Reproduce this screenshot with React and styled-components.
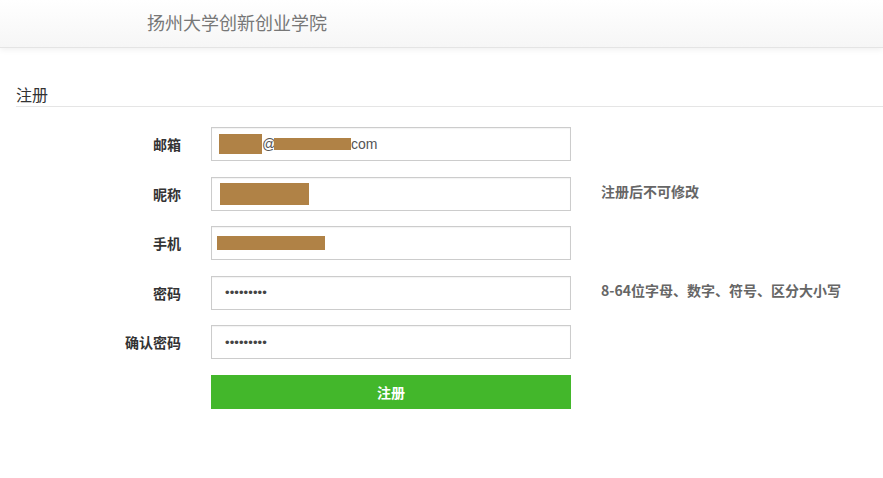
import React from "react";
import styled, { createGlobalStyle } from "styled-components";

const Global = createGlobalStyle`
  html, body { margin: 0; padding: 0; background: #fff; }
  body { font-family: "Liberation Sans", "Noto Sans CJK SC", sans-serif; color: #333; }
`;

const Header = styled.header`
  height: 47px;
  background: linear-gradient(#ffffff, #f6f6f6);
  border-bottom: 1px solid #e4e4e4;
  box-shadow: 0 2px 6px rgba(0, 0, 0, 0.06);
  display: flex;
  align-items: flex-start;
  padding-left: 147px;
`;

const Brand = styled.div`
  font-family: "Noto Sans CJK SC", sans-serif;
  font-size: 18px;
  line-height: 22px;
  margin-top: 11px;
  color: #777;
`;

const Section = styled.section`
  margin: 36px 0 0 16px;
`;

const SectionTitle = styled.h2`
  margin: 0;
  font-family: "Noto Sans CJK SC", sans-serif;
  font-weight: normal;
  font-size: 16px;
  line-height: 20px;
  color: #333;
  padding-bottom: 2px;
  border-bottom: 1px solid #e5e5e5;
`;

const Form = styled.div`
  display: grid;
  grid-template-columns: 165px 360px auto;
  column-gap: 30px;
  row-gap: 15.5px;
  margin-top: 20px;
  align-items: center;
`;

const Label = styled.label`
  font-family: "Noto Sans CJK SC", sans-serif;
  font-weight: bold;
  font-size: 14px;
  color: #333;
  text-align: right;
`;

const Field = styled.div`
  box-sizing: border-box;
  height: 34px;
  border: 1px solid #cccccc;
  box-shadow: inset 0 1px 1px rgba(0, 0, 0, 0.05);
  background: #fff;
  display: flex;
  align-items: center;
  padding-left: 5px;
  font-size: 14px;
  color: #555;
  white-space: nowrap;
  overflow: hidden;
`;

const Redact = styled.span`
  display: inline-block;
  width: ${(p) => p.$w}px;
  height: ${(p) => p.$h}px;
  margin-left: ${(p) => p.$ml || 0}px;
  background: #b08246;
  flex: none;
`;

const At = styled.span`
  display: inline-block;
  width: 14px;
  flex: none;
`;

const Dots = styled.span`
  margin-left: 8px;
  font-size: 13px;
  letter-spacing: 0.1px;
  color: #444;
`;

const Hint = styled.div`
  font-family: "Noto Sans CJK SC", sans-serif;
  font-weight: bold;
  font-size: 14px;
  color: #666;
  margin-bottom: 6px;
`;

const Submit = styled.button`
  grid-column: 2;
  height: 34px;
  border: none;
  background: #43b72b;
  color: #fff;
  font-family: "Noto Sans CJK SC", sans-serif;
  font-weight: bold;
  font-size: 14px;
  cursor: pointer;
`;

export default function App() {
  return (
    <>
      <Global />
      <Header>
        <Brand>扬州大学创新创业学院</Brand>
      </Header>
      <Section>
        <SectionTitle>注册</SectionTitle>
        <Form>
          <Label>邮箱</Label>
          <Field>
            <Redact $w={43} $h={20} $ml={2} />
            <At>@</At>
            <Redact $w={77} $h={12} $ml={-2} />
            <span>com</span>
          </Field>
          <span />

          <Label>昵称</Label>
          <Field>
            <Redact $w={89} $h={22} $ml={3} />
          </Field>
          <Hint>注册后不可修改</Hint>

          <Label>手机</Label>
          <Field>
            <Redact $w={108} $h={14} />
          </Field>
          <span />

          <Label>密码</Label>
          <Field>
            <Dots>•••••••••</Dots>
          </Field>
          <Hint>8-64位字母、数字、符号、区分大小写</Hint>

          <Label>确认密码</Label>
          <Field>
            <Dots>•••••••••</Dots>
          </Field>
          <span />

          <Submit>注册</Submit>
        </Form>
      </Section>
    </>
  );
}
